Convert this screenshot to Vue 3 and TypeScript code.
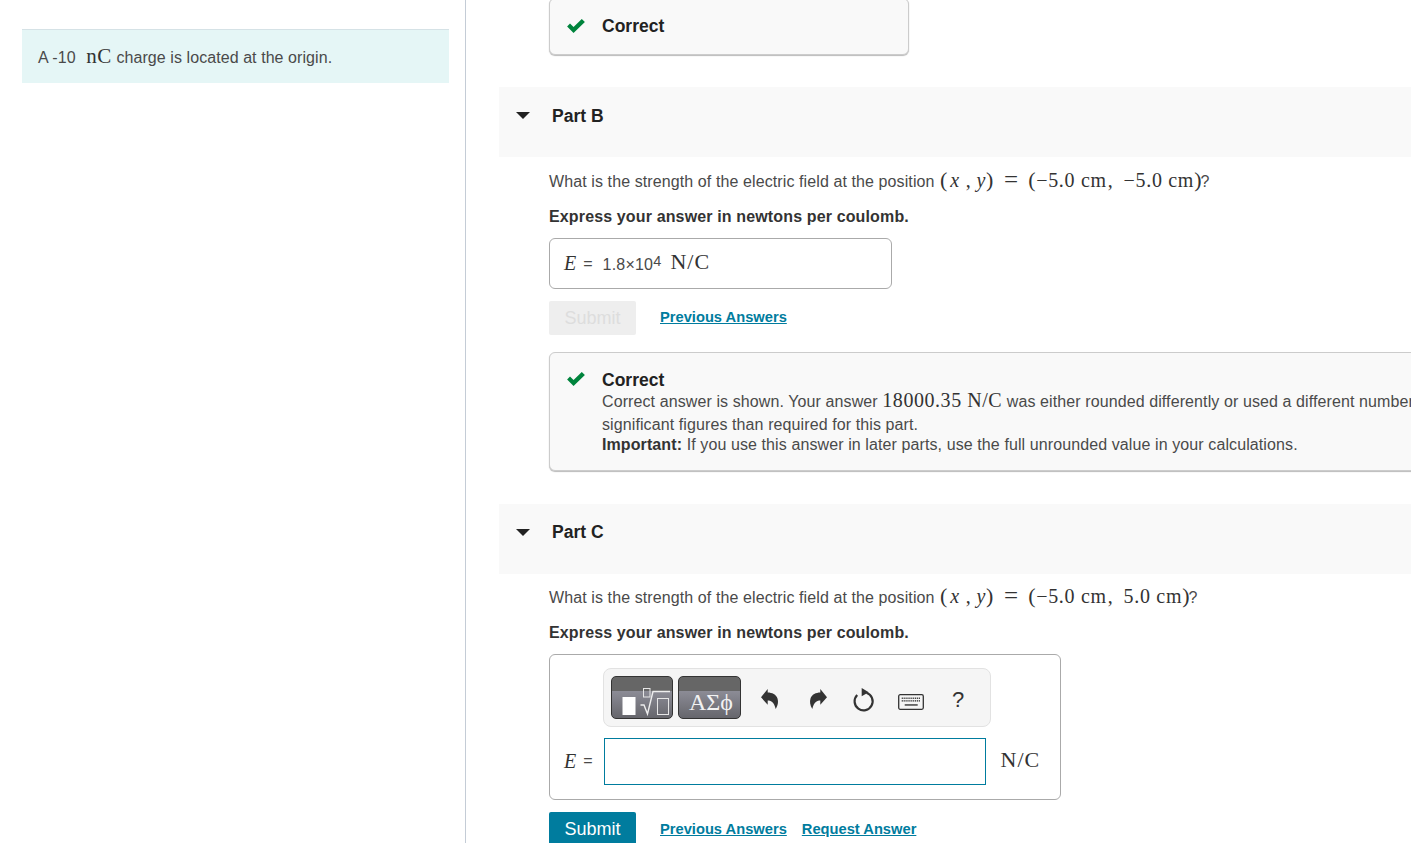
<script setup lang="ts">
const kbKeys: { x: number; y: number; w: number }[] = []
for (let r = 0; r < 3; r++) {
  for (let c = 0; c < 10; c++) {
    if (r === 2 && c > 0) break
    kbKeys.push(r === 2 ? { x: 6, y: 10.2, w: 13 } : { x: 3 + c * 1.9, y: 3.5 + r * 2.6, w: 1.2 })
  }
}
</script>

<template>
  <div class="page">
    <aside class="side">
      <div class="intro">A -10 <span class="math nc">nC</span> charge is located at the origin.</div>
    </aside>

    <main class="main">
      <div class="indent">
        <div class="feedback short">
          <svg class="check" viewBox="1 .8 16 12.6"><path d="M1 7.5l2.600-2.700 3.200 3.200L14.200 .8 17 3.500 6.800 13.400z" /></svg>
          <div class="fb-text"><strong class="fb-title">Correct</strong></div>
        </div>
      </div>

      <section class="part part-b">
        <header class="part-head">
          <span class="caret"></span>
          <h2>Part B</h2>
        </header>
        <div class="indent">
          <p class="question">What is the strength of the electric field at the position <span class="math expr"><span class="paren">(</span><i class="vx">x</i><span class="comma">,</span><i class="vy">y</i><span class="paren">)</span><span class="eq">=</span><span class="paren">(</span>−5.0 cm<span class="comma">,</span><span class="gap"></span>−5.0 cm<span class="paren">)</span></span>?</p>
          <p class="express">Express your answer in newtons per coulomb.</p>
          <div class="answer-done">
            <span class="math lhs"><i>E</i></span><span class="equals">=</span>
            <span class="value">1.8×10<sup>4</sup></span>
            <span class="math unit">N/C</span>
          </div>
          <div class="actions">
            <button class="submit disabled" type="button">Submit</button>
            <a class="link" href="#">Previous Answers</a>
          </div>
          <div class="feedback long">
            <svg class="check" viewBox="1 .8 16 12.6"><path d="M1 7.5l2.600-2.700 3.200 3.200L14.200 .8 17 3.500 6.800 13.400z" /></svg>
            <div class="fb-text">
              <strong class="fb-title">Correct</strong>
              <div class="fb-line">Correct answer is shown. Your answer <span class="math wide">18000.35 N/C</span> was either rounded differently or used a different number</div>
              <div class="fb-line2">significant figures than required for this part.</div>
              <div class="fb-line3"><strong>Important:</strong> If you use this answer in later parts, use the full unrounded value in your calculations.</div>
            </div>
          </div>
        </div>
      </section>

      <section class="part part-c">
        <header class="part-head">
          <span class="caret"></span>
          <h2>Part C</h2>
        </header>
        <div class="indent">
          <p class="question">What is the strength of the electric field at the position <span class="math expr"><span class="paren">(</span><i class="vx">x</i><span class="comma">,</span><i class="vy">y</i><span class="paren">)</span><span class="eq">=</span><span class="paren">(</span>−5.0 cm<span class="comma">,</span><span class="gap"></span>5.0 cm<span class="paren">)</span></span>?</p>
          <p class="express">Express your answer in newtons per coulomb.</p>
          <div class="answer-edit">
            <div class="toolbar">
              <button class="tool-btn templates" type="button" aria-label="Templates">
                <svg width="60" height="41" viewBox="0 0 60 41">
                  <rect x="10.500" y="20" width="13" height="18" fill="#fff" />
                  <rect x="31.500" y="11.500" width="6.500" height="8.500" fill="none" stroke="#e6e6e6" />
                  <path d="M28.500 28h3.500l3.500 9L41 14.500h17" fill="none" stroke="#eee" stroke-width="1.400" />
                  <rect x="45.500" y="21.500" width="11" height="16" fill="none" stroke="#e6e6e6" />
                </svg>
              </button>
              <button class="tool-btn greek" type="button">ΑΣϕ</button>
              <div class="tool-icons">
                <svg class="ic undo" width="20" height="22" viewBox="0 0 20 22"><path d="M7.700 1L1 9.300l6.700 7.400v-4.200c2.800 0 6.300 1 8 8.500 2.300-4 2.800-7 1.800-10.500C16.300 6.500 12 4.500 7.700 4.500z" fill="#333" /></svg>
                <svg class="ic redo" width="20" height="22" viewBox="0 0 20 22"><path d="M12.300 1L19 9.300l-6.700 7.400v-4.200c-2.800 0-6.300 1-8 8.500-2.300-4-2.800-7-1.800-10.500C3.700 6.500 8 4.500 12.300 4.500z" fill="#333" /></svg>
                <svg class="ic refresh" width="24" height="26" viewBox="0 0 24 26">
                  <path d="M14.500 4.800A9 9 0 1 1 5.200 7" fill="none" stroke="#333" stroke-width="2.200" />
                  <path d="M9.700 0v8.200l7-4z" fill="#333" />
                </svg>
                <svg class="ic kb" width="26" height="16" viewBox="0 0 26 16">
                  <rect x=".7" y=".7" width="24.600" height="14.600" rx="1.500" fill="#f5f5f5" stroke="#333" stroke-width="1.300" />
                  <rect v-for="(k, i) in kbKeys" :key="i" :x="k.x + 0.7" :y="k.y" :width="k.w" height="1.500" fill="#444" />
                </svg>
                <span class="help">?</span>
              </div>
            </div>
            <div class="input-row">
              <span class="math lhs"><i>E</i></span><span class="equals">=</span>
              <div class="input"></div>
              <span class="math unit">N/C</span>
            </div>
          </div>
          <div class="actions last">
            <button class="submit" type="button">Submit</button>
            <a class="link" href="#">Previous Answers</a>
            <a class="link" href="#">Request Answer</a>
          </div>
        </div>
      </section>
    </main>
  </div>
</template>

<style>
html, body { margin: 0; background: #fff; overflow: hidden; }
</style>

<style scoped>
.page {
  display: flex;
  height: 843px;
  width: 1411px;
  overflow: hidden;
  font-family: "Liberation Sans", Arial, sans-serif;
  font-size: 16px;
  line-height: 22px;
  color: #4a4a4a;
}
.side {
  flex: 0 0 466px;
  box-sizing: border-box;
  padding: 29px 16px 0 22px;
  border-right: 1px solid #c4ccd6;
}
.intro {
  box-sizing: border-box;
  height: 54px;
  padding: 15px 16px 0;
  background: #e5f6f6;
  border-top: 1px solid #d5e2e6;
  letter-spacing: .07px;
}
.math { font-family: "Liberation Serif", "Times New Roman", serif; font-size: 20px; color: #333; }
.nc { margin: 0 0 0 6px; font-size: 21px; letter-spacing: .6px; }
.wide { letter-spacing: .55px; }
.expr { margin-left: 1px; letter-spacing: .7px; }
.paren { font-size: 22px; }
.paren:last-child { letter-spacing: 0; margin-right: -1px; }
.vx { margin: 0 5px 0 2px; }
.vy { margin: 0 0 0 5px; }
.comma { margin-left: 1px; }
.gap { display: inline-block; width: 10px; }
.eq { margin: 0 10px; font-size: 25px; letter-spacing: 0; vertical-align: -1px; }
.main { flex: 0 0 912px; margin-left: 33px; width: 912px; }
.indent { padding-left: 50px; }
.feedback {
  display: flex;
  box-sizing: border-box;
  background: #f9f9f9;
  border: 1px solid #ccc;
  border-radius: 6px;
  box-shadow: 0 1px 1px #bbb;
  padding: 0 17px;
}
.feedback.short { width: 360px; height: 57px; margin-top: -2px; padding-bottom: 1px; align-items: center; }
.feedback.long { width: 960px; height: 119px; margin-top: 17px; padding-top: 16px; }
.check { width: 18px; height: 14px; flex: none; fill: #00843d; }
.long .check { margin-top: 3px; }
.fb-text { margin-left: 17px; letter-spacing: .1px; }
.fb-title { display: block; font-size: 17.500px; font-weight: 700; color: #222; letter-spacing: 0; }
.fb-line { white-space: nowrap; margin-top: -2px; height: 25px; }
.fb-line2 { height: 20px; }
.fb-line3 strong { color: #333; }
.fb-line3 { white-space: nowrap; }
.part-b { margin-top: 32px; }
.part-c { margin-top: 33px; }
.part-head {
  display: flex;
  align-items: center;
  height: 70px;
  padding: 0 0 12px 17px;
  box-sizing: border-box;
  background: #f9f9f9;
}
.part-c .part-head { padding-bottom: 14px; }
.caret {
  width: 0;
  height: 0;
  margin-bottom: 2px;
  border-left: 7px solid transparent;
  border-right: 7px solid transparent;
  border-top: 7px solid #222;
}
.part-c .caret { margin-bottom: 0; }
.part-head h2 { margin: 0 0 0 22px; font-size: 17.500px; font-weight: 700; color: #222; line-height: 22px; }
.question { margin: 12px 0 0; height: 22px; white-space: nowrap; letter-spacing: .1px; }
.express { margin: 15px 0 0; height: 22px; font-weight: 700; color: #333; letter-spacing: .14px; }
.part-c .question { margin-top: 11px; }
.answer-done {
  display: flex;
  align-items: center;
  box-sizing: border-box;
  width: 343px;
  height: 51px;
  margin-top: 10px;
  padding: 0 14px;
  border: 1px solid #aaa;
  border-radius: 6px;
}
.lhs { font-size: 20px; }
.equals { margin-left: 7px; }
.value { margin: 2px 0 0 10px; letter-spacing: .2px; }
.value sup { font-size: 14.500px; line-height: 0; vertical-align: 4px; }
.answer-done .unit { margin: 0 0 4px 9px; font-size: 22px; letter-spacing: 1px; }
.actions { display: flex; align-items: center; gap: 15px; margin-top: 12px; height: 34px; }
.actions:not(.last) .link { margin-bottom: 2px; }
.submit {
  width: 87px;
  height: 34px;
  margin-right: 9px;
  padding: 0;
  border: none;
  border-radius: 2px;
  background: #007c9e;
  color: #fff;
  font: 18px "Liberation Sans", Arial, sans-serif;
}
.submit.disabled { background: #eee; color: #ddd; }
.link { color: #007c9e; font-weight: 700; font-size: 14.700px; text-decoration: underline; }
.answer-edit {
  box-sizing: border-box;
  width: 512px;
  height: 146px;
  margin-top: 10px;
  padding: 13px 14px 0;
  border: 1px solid #aaa;
  border-radius: 6px;
}
.toolbar {
  display: flex;
  align-items: center;
  box-sizing: border-box;
  width: 388px;
  height: 59px;
  margin-left: 39px;
  padding: 0 7px;
  gap: 5px;
  background: #f5f5f5;
  border: 1px solid #e2e2e2;
  border-radius: 8px;
}
.tool-btn {
  box-sizing: border-box;
  width: 62px;
  height: 43px;
  padding: 0;
  border: 1px solid #333;
  border-radius: 5px;
  background: linear-gradient(#666 0 14px, #8c8c96 14px, #66666c);
  color: #f2f2f2;
  display: flex;
  align-items: flex-end;
  justify-content: center;
}
.greek { width: 63px; font: 24px/1 "Liberation Serif", serif; padding: 0 0 4px 3px; }
.tool-icons { display: flex; align-items: center; margin-left: 14px; }
.ic { flex: none; }
.undo { margin: 3px 28px 0 0; }
.redo { margin: 3px 24px 0 0; }
.refresh { margin: 7px 22px 0 0; }
.kb { margin: 9px 0 0 0; }
.help { margin: 5px 0 0 28px; font-size: 22px; color: #333; }
.input-row { display: flex; align-items: center; margin-top: 11px; }
.lhs { margin-bottom: 2px; }
.input-row .equals { margin-bottom: 2px; }
.input {
  box-sizing: border-box;
  width: 382px;
  height: 47px;
  margin-left: 11px;
  border: 1px solid #007c9e;
  background: #fff;
}
.input-row .unit { margin: 0 0 3px 15px; font-size: 22px; letter-spacing: 1px; }
</style>
